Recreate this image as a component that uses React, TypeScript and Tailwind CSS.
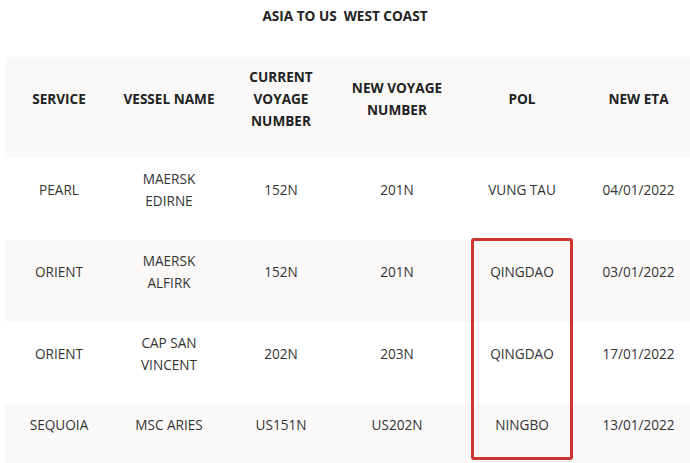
import React from 'react'

interface Row {
  service: string
  vessel: string[]
  current: string
  next: string
  pol: string
  eta: string
}

const rows: Row[] = [
  { service: 'PEARL', vessel: ['MAERSK', 'EDIRNE'], current: '152N', next: '201N', pol: 'VUNG TAU', eta: '04/01/2022' },
  { service: 'ORIENT', vessel: ['MAERSK', 'ALFIRK'], current: '152N', next: '201N', pol: 'QINGDAO', eta: '03/01/2022' },
  { service: 'ORIENT', vessel: ['CAP SAN', 'VINCENT'], current: '202N', next: '203N', pol: 'QINGDAO', eta: '17/01/2022' },
  { service: 'SEQUOIA', vessel: ['MSC ARIES'], current: 'US151N', next: 'US202N', pol: 'NINGBO', eta: '13/01/2022' },
]

const widths = ['w-[108px]', 'w-[112px]', 'w-[112px]', 'w-[120px]', 'w-[130px]', 'w-[103px]']

function Cell({ lines, bold, w, last }: { lines: string[]; bold?: boolean; w: string; last?: boolean }) {
  return (
    <div className={`${w} shrink-0 flex items-center justify-center text-center`}>
      <div className={`leading-[22px] ${last ? 'mb-[40px]' : 'mb-[18px]'} ${bold ? 'font-bold text-[#222]' : 'text-[#333]'}`}>
        {lines.map((l, i) => (
          <div key={i}>{l}</div>
        ))}
      </div>
    </div>
  )
}

export default function App() {
  return (
    <div
      className="relative w-[690px] h-[463px] overflow-hidden bg-white text-[13.6px]"
      style={{ fontFamily: '"Open Sans", "Liberation Sans", sans-serif' }}
    >
      <div className="pt-[7px] h-[57px] text-center font-bold text-[#222] leading-[18px] whitespace-pre">
        ASIA TO US  WEST COAST
      </div>

      <div className="ml-[5px]">
        {/* Header */}
        <div className="flex h-[101px] bg-[#faf9f8]">
          <Cell w={widths[0]} bold lines={['SERVICE']} />
          <Cell w={widths[1]} bold lines={['VESSEL NAME']} />
          <Cell w={widths[2]} bold lines={['CURRENT', 'VOYAGE', 'NUMBER']} />
          <Cell w={widths[3]} bold lines={['NEW VOYAGE', 'NUMBER']} />
          <Cell w={widths[4]} bold lines={['POL']} />
          <Cell w={widths[5]} bold lines={['NEW ETA']} />
        </div>

        {rows.map((r, i) => {
          const last = i === rows.length - 1
          return (
            <div key={i} className={`flex h-[82px] ${i % 2 === 1 ? 'bg-[#faf9f8]' : 'bg-white'}`}>
              <Cell w={widths[0]} last={last} lines={[r.service]} />
              <Cell w={widths[1]} last={last} lines={r.vessel} />
              <Cell w={widths[2]} last={last} lines={[r.current]} />
              <Cell w={widths[3]} last={last} lines={[r.next]} />
              <Cell w={widths[4]} last={last} lines={[r.pol]} />
              <Cell w={widths[5]} last={last} lines={[r.eta]} />
            </div>
          )
        })}
      </div>

      {/* highlight box over the POL column */}
      <div className="absolute left-[471px] top-[238px] w-[102px] h-[222px] border-[3px] border-[#cc3530] rounded-[3px]" />
    </div>
  )
}
